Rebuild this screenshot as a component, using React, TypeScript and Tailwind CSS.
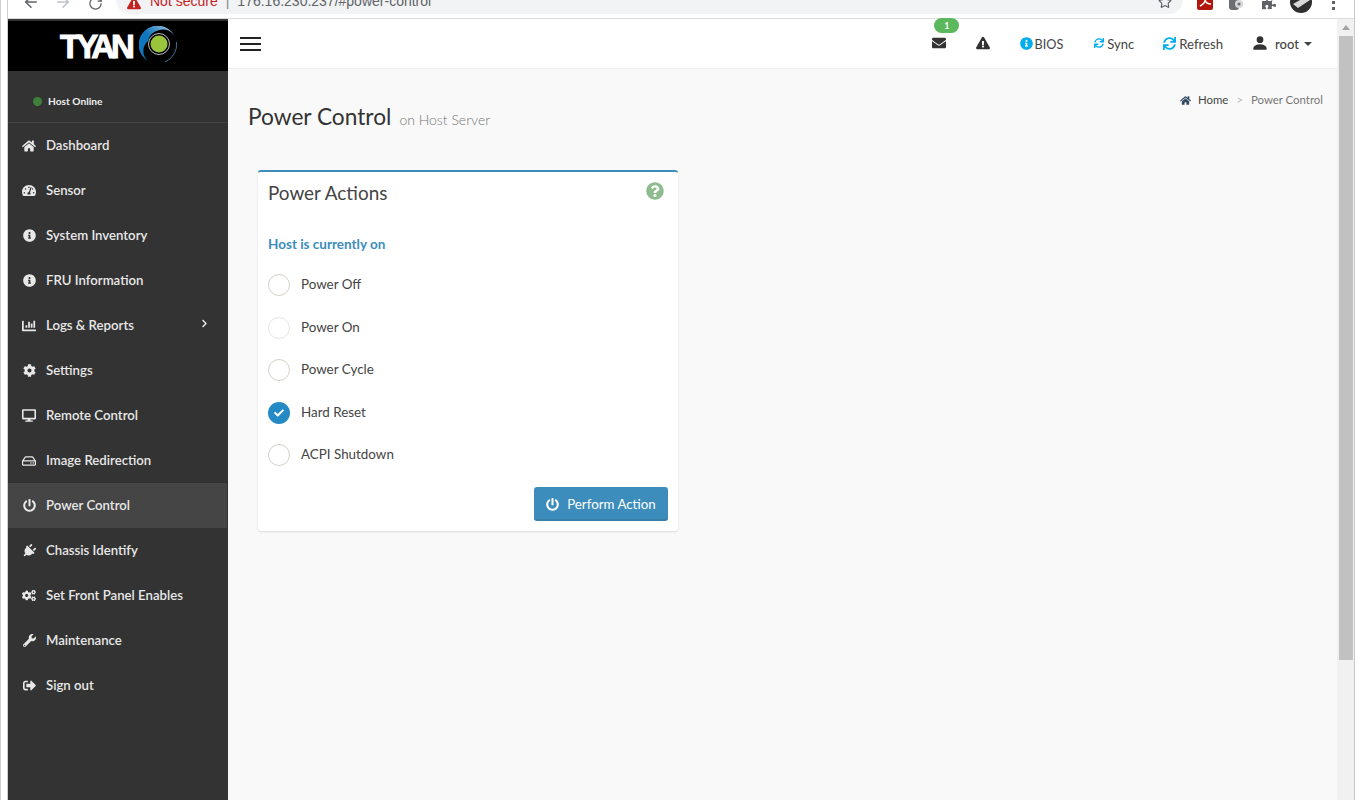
import React from "react"
import { ArrowLeft, ArrowRight, RotateCw, Star } from "lucide-react"
import {
  FaHome,
  FaTachometerAlt,
  FaInfoCircle,
  FaChartBar,
  FaCog,
  FaDesktop,
  FaRegHdd,
  FaPowerOff,
  FaPlug,
  FaCogs,
  FaWrench,
  FaSignOutAlt,
  FaEnvelope,
  FaExclamationTriangle,
  FaQuestionCircle,
  FaCheck,
  FaSync,
  FaPuzzlePiece,
  FaChevronRight,
} from "react-icons/fa"
import { BsPersonFill } from "react-icons/bs"

const NAV = [
  { label: "Dashboard", icon: FaHome, size: 14 },
  { label: "Sensor", icon: FaTachometerAlt, size: 15 },
  { label: "System Inventory", icon: FaInfoCircle, size: 13 },
  { label: "FRU Information", icon: FaInfoCircle, size: 13 },
  { label: "Logs & Reports", icon: FaChartBar, size: 16, more: true },
  { label: "Settings", icon: FaCog, size: 13 },
  { label: "Remote Control", icon: FaDesktop, size: 15 },
  { label: "Image Redirection", icon: FaRegHdd, size: 14 },
  { label: "Power Control", icon: FaPowerOff, size: 13, active: true },
  { label: "Chassis Identify", icon: FaPlug, size: 14, tilt: true },
  { label: "Set Front Panel Enables", icon: FaCogs, size: 15 },
  { label: "Maintenance", icon: FaWrench, size: 13 },
  { label: "Sign out", icon: FaSignOutAlt, size: 13 },
]

const ACTIONS = [
  { label: "Power Off" },
  { label: "Power On", faint: true },
  { label: "Power Cycle" },
  { label: "Hard Reset", checked: true },
  { label: "ACPI Shutdown" },
]

function BrowserBar() {
  return (
    <div className="h-[19px] shrink-0 flex items-end overflow-hidden bg-white border-b border-[#dadce0]">
      <div className="w-[108px] shrink-0 flex items-end pb-[7px] pl-[14px] gap-[14px] text-[#5f6368]">
        <ArrowLeft size={18} strokeWidth={2} />
        <ArrowRight size={18} strokeWidth={2} className="text-[#bdc1c6]" />
        <RotateCw size={15} strokeWidth={2} className="ml-[2px]" />
      </div>
      <div className="w-[1067px] h-[14px] mb-[4px] shrink-0 rounded-br-[14px] rounded-bl-[14px] bg-[#f1f3f4] flex items-end pb-[3px] pl-[11px] pr-[11px] text-[14px] leading-[20px] font-['Liberation_Sans',sans-serif]">
        <FaExclamationTriangle size={14} className="text-[#c5221f] mb-[1px]" />
        <span className="ml-[9px] text-[#c5221f]">Not secure</span>
        <span className="ml-[8px] text-[#80868b]">|</span>
        <span className="ml-[8px] text-[#5f6368]">176.16.230.237/#power-control</span>
        <Star size={14} className="ml-auto mb-[2px] text-[#5f6368]" />
      </div>
      <div className="flex-1 flex items-end pb-[8px] pl-[14px] text-[#5f6368]">
        <svg width="16" height="14" viewBox="0 0 16 14">
          <rect width="16" height="14" rx="2" fill="#b3160c" />
          <path d="M3 10 C7 8 9 5 8 1 M8 4 C9 7 11 8 14 8" fill="none" stroke="#fff" strokeWidth="1.5" />
        </svg>
        <svg width="14" height="14" viewBox="0 0 14 14" className="ml-[16px]">
          <rect width="10" height="14" rx="3" fill="#6b6f73" />
          <circle cx="10" cy="8" r="4" fill="#d5d7d9" />
          <circle cx="10" cy="8" r="1.5" fill="#6b6f73" />
        </svg>
        <FaPuzzlePiece size={14} className="ml-[19px]" />
        <svg width="22" height="22" viewBox="0 0 22 22" className="ml-[14px] -mb-[3px]">
          <circle cx="11" cy="11" r="11" fill="#2f2f2f" />
          <path d="M3 13 L17 5 L20 9 L8 17 Z" fill="#d8d8d8" />
        </svg>
        <div className="w-[3px] h-[9px] ml-[20px] border-y-[3px] border-[#5f6368]" />
      </div>
    </div>
  )
}

function Logo() {
  return (
    <div className="h-[52px] shrink-0 bg-black flex items-center pl-[52px] border-t-2 border-[#333]">
      <span className="font-['Liberation_Sans',sans-serif] font-bold text-[33px] leading-none tracking-[-4px] text-white [-webkit-text-stroke:1px_white]">
        TYAN
      </span>
      <svg width="40" height="38" viewBox="0 0 40 38" className="ml-[8px] -mt-[2px]">
        <defs>
          <linearGradient id="swoosh" x1="0" y1="1" x2="1" y2="0">
            <stop offset="0.5" stopColor="#0f75bc" />
            <stop offset="1" stopColor="#a8cbe2" />
          </linearGradient>
        </defs>
        <path d="M9 35 A19 19 0 1 1 35 9 A15 15 0 0 0 9 15 A13 13 0 0 0 9 35 Z" fill="url(#swoosh)" />
        <path d="M37.5 16 A19 19 0 0 1 26 36" fill="none" stroke="#4a6f8c" strokeWidth="1" />
        <circle cx="20" cy="18" r="10.5" fill="none" stroke="#e8e8e8" strokeWidth="0.8" />
        <circle cx="20" cy="18" r="8.5" fill="#9ac43c" />
      </svg>
    </div>
  )
}

function Sidebar() {
  return (
    <aside className="w-[220px] shrink-0 bg-[#333333] flex flex-col">
      <Logo />
      <div className="h-[52px] shrink-0 flex items-center pl-[25px] pt-[10px] border-b border-[#444]">
        <span className="w-[9px] h-[9px] rounded-full bg-[#3f7f3c]" />
        <span className="ml-[6px] text-[10.2px] font-bold text-[#eeeeee]">Host Online</span>
      </div>
      <nav className="flex flex-col">
        {NAV.map((item) => (
          <div
            key={item.label}
            className={`h-[45px] flex items-center pl-[14px] text-[13.2px] font-semibold text-[#e8e8e8] ${
              item.active ? "bg-[#454545] mr-[1px]" : ""
            }`}
          >
            <span className="w-[14px] flex justify-center">
              <item.icon size={item.size} className={item.tilt ? "rotate-45" : ""} />
            </span>
            <span className="ml-[10px]">{item.label}</span>
            {item.more && <FaChevronRight size={9} className="ml-auto mr-[19px] -mt-[5px]" />}
          </div>
        ))}
      </nav>
    </aside>
  )
}

function Header() {
  return (
    <header className="h-[50px] shrink-0 bg-white border-b border-[#eeeeee] flex items-center text-[13px] text-[#444]">
      <div className="ml-[12px] w-[21px] flex flex-col gap-[4px]">
        <span className="h-[2px] bg-[#222]" />
        <span className="h-[2px] bg-[#222]" />
        <span className="h-[2px] bg-[#222]" />
      </div>
      <div className="ml-auto flex items-center mr-[25px]">
        <span className="relative flex">
          <FaEnvelope size={14} className="text-[#333]" />
          <span className="absolute -top-[18px] left-[2px] w-[25px] h-[15px] rounded-full bg-[#5cb85c] text-white text-[9px] font-bold leading-[15px] text-center">
            1
          </span>
        </span>
        <FaExclamationTriangle size={14} className="ml-[30px] text-[#333]" />
        <FaInfoCircle size={13} className="ml-[30px] text-[#00aeef]" />
        <span className="ml-[1px] mt-[2px] text-[12.7px]">BIOS</span>
        <FaSync size={10} className="ml-[31px] text-[#00aeef]" />
        <span className="ml-[3px] mt-[2px] text-[13px]">Sync</span>
        <FaSync size={13} className="ml-[29px] text-[#00aeef]" />
        <span className="ml-[3px] mt-[2px] text-[13.2px]">Refresh</span>
        <BsPersonFill size={18} className="ml-[28px] text-[#333]" />
        <span className="ml-[6px] mt-[2px] font-medium">root</span>
        <span className="ml-[5px] mt-[2px] border-x-4 border-t-4 border-x-transparent border-t-[#444]" />
      </div>
    </header>
  )
}

function PowerCard() {
  return (
    <section className="w-[420px] h-[361px] ml-[10px] mt-[35px] bg-white rounded-[3px] border-t-2 border-[#3c8dbc] shadow-[0_1px_2px_rgba(0,0,0,0.12)] px-[10px] flex flex-col">
      <div className="flex items-center justify-between h-[42px]">
        <h2 className="text-[18.9px] text-[#444]">Power Actions</h2>
        <FaQuestionCircle size={18} className="mr-[4px] -mt-[4px] text-[#8fbc8f]" />
      </div>
      <p className="mt-[20px] h-[20px] text-[13.5px] leading-[20px] font-bold text-[#3c8dbc]">Host is currently on</p>
      <div className="mt-[20px] flex flex-col gap-[20.5px]">
        {ACTIONS.map((action) => (
          <div key={action.label} className="h-[22px] flex items-center">
            {action.checked ? (
              <span className="w-[22px] h-[22px] rounded-full bg-[#2489c5] flex items-center justify-center text-white">
                <FaCheck size={10} />
              </span>
            ) : (
              <span className={`w-[22px] h-[22px] rounded-full border ${action.faint ? "border-[#e8e4e0]" : "border-[#d5d0ca]"}`} />
            )}
            <span className="ml-[11px] -mt-[1px] text-[13.4px] text-[#444]">{action.label}</span>
          </div>
        ))}
      </div>
      <div className="flex justify-end mt-[21px]">
        <button className="w-[134px] h-[34px] pt-[3px] rounded-[3px] bg-[#3c8dbc] border-b-2 border-[#367fa9] flex items-center justify-center gap-[8px] text-[13.3px] text-white">
          <FaPowerOff size={13} />
          Perform Action
        </button>
      </div>
    </section>
  )
}

function Main() {
  return (
    <div className="flex-1 bg-[#f9f9f9] flex flex-col">
      <Header />
      <div className="px-[20px]">
        <div className="flex items-start justify-between mt-[16px]">
          <div className="flex items-baseline mt-[14px]">
            <h1 className="text-[22.7px] leading-[36px] text-[#333]">Power Control</h1>
            <span className="ml-[8px] text-[14px] font-light text-[#777]">on Host Server</span>
          </div>
          <div className="flex items-center text-[11.4px] -mr-[6px] leading-[30px]">
            <FaHome size={11} className="text-[#34495e]" />
            <span className="ml-[7px] text-[#444]">Home</span>
            <span className="ml-[8px] text-[#bbb]">&gt;</span>
            <span className="ml-[8px] text-[#777]">Power Control</span>
          </div>
        </div>
        <PowerCard />
      </div>
    </div>
  )
}

function Scrollbar() {
  return (
    <div className="w-[17px] shrink-0 bg-[#f1f1f1] flex flex-col items-center">
      <span className="mt-[6px] border-x-[4px] border-b-[5px] border-x-transparent border-b-[#a3a3a3]" />
      <div className="mt-[6px] w-[14px] h-[624px] bg-[#c1c1c1]" />
    </div>
  )
}

export default function App() {
  return (
    <div className="h-[800px] w-[1363px] overflow-hidden bg-white flex font-['Lato',sans-serif]">
      <div className="w-[8px] shrink-0 bg-white border-l border-[#d0d0d0] border-r" />
      <div className="w-[1347px] shrink-0 flex flex-col border-r border-[#c8c8c8]">
        <BrowserBar />
        <div className="flex-1 flex min-h-0">
          <Sidebar />
          <Main />
          <Scrollbar />
        </div>
      </div>
    </div>
  )
}
